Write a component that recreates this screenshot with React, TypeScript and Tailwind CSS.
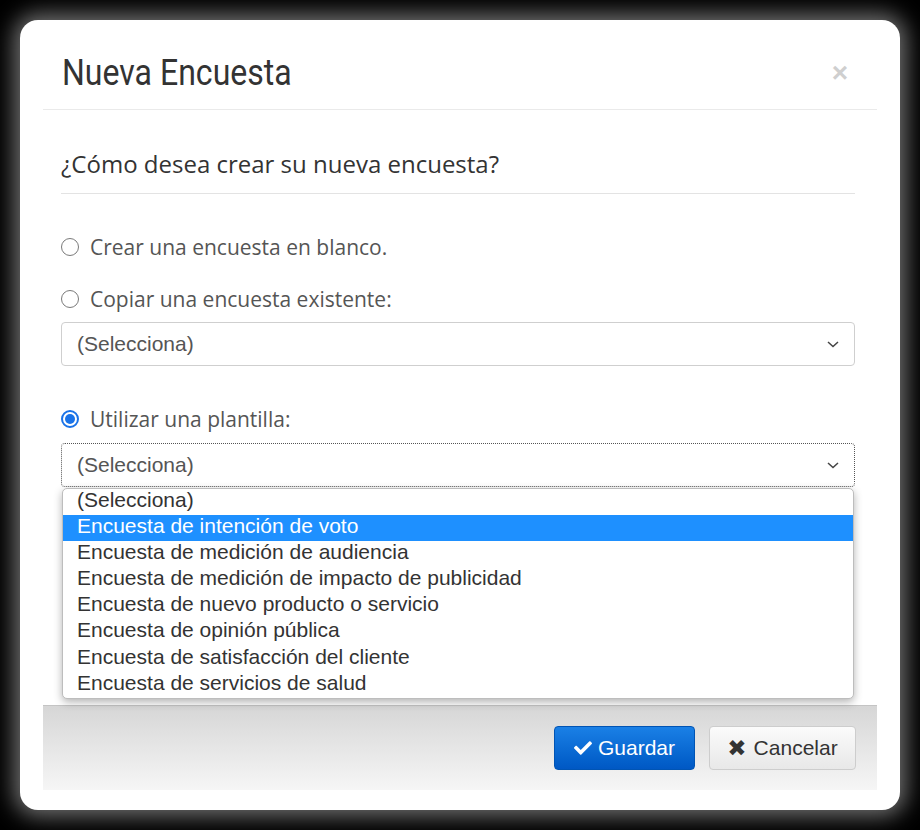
import React from 'react';
import { FaCheck } from 'react-icons/fa';

const templates = [
  '(Selecciona)',
  'Encuesta de intención de voto',
  'Encuesta de medición de audiencia',
  'Encuesta de medición de impacto de publicidad',
  'Encuesta de nuevo producto o servicio',
  'Encuesta de opinión pública',
  'Encuesta de satisfacción del cliente',
  'Encuesta de servicios de salud',
];

const Radio = ({ checked }: { checked?: boolean }) =>
  checked ? (
    <span className="flex h-[18px] w-[18px] items-center justify-center rounded-full border-2 border-[#1a73e8] bg-white">
      <span className="h-[10px] w-[10px] rounded-full bg-[#1a73e8]" />
    </span>
  ) : (
    <span className="h-[18px] w-[18px] rounded-full border border-[#7a7a7a] bg-white" />
  );

const Chevron = () => (
  <svg width="14" height="10" viewBox="0 0 14 10" className="text-[#444]">
    <path d="M2 3l5 4.5L12 3" fill="none" stroke="currentColor" strokeWidth="1.5" />
  </svg>
);

const SelectBox = ({ focused }: { focused?: boolean }) => (
  <div
    className={
      'flex h-[44px] items-center justify-between rounded-[4px] bg-white pl-[15px] pr-[14px] ' +
      (focused ? 'border border-dotted border-[#555]' : 'border border-[#cfcfcf]')
    }
  >
    <span className="text-[21px] text-[#555]" style={{ fontFamily: '"Liberation Sans", Arial, sans-serif' }}>
      (Selecciona)
    </span>
    <Chevron />
  </div>
);

export default function App() {
  return (
    <div className="min-h-[830px] w-[920px] bg-black p-[20px]">
      <div
        className="flex h-[790px] flex-col rounded-[18px] bg-white px-[23px] pt-[23px] pb-[20px] shadow-[0_0_22px_6px_rgba(255,255,255,0.45)]"
        style={{ fontFamily: '"Open Sans", sans-serif' }}
      >
        {/* header */}
        <div className="flex h-[67px] items-center justify-between border-b border-[#eaeaea] pb-[6px] pl-[19px] pr-[29px]">
          <h1
            className="origin-left scale-x-[0.89] text-[36px] leading-none font-normal text-[#333] whitespace-nowrap"
            style={{ fontFamily: 'Roboto, sans-serif' }}
          >
            Nueva Encuesta
          </h1>
          <span className="text-[28px] font-bold leading-none text-[#cfcfcf]" style={{ fontFamily: '"Liberation Sans", sans-serif' }}>
            ×
          </span>
        </div>

        {/* body */}
        <div className="relative flex-1 pl-[18px] pr-[22px]">
          <div className="mt-[38px] border-b border-[#e3e3e3] pb-[13px] text-[24px] leading-[32px] text-[#333]">
            ¿Cómo desea crear su nueva encuesta?
          </div>

          <label className="mt-[39px] flex items-center gap-[11px] text-[21px] leading-[28px] text-[#555]">
            <Radio />
            Crear una encuesta en blanco.
          </label>

          <label className="mt-[24px] flex items-center gap-[11px] text-[21px] leading-[28px] text-[#555]">
            <Radio />
            Copiar una encuesta existente:
          </label>
          <div className="mt-[9px]">
            <SelectBox />
          </div>

          <label className="mt-[39px] flex items-center gap-[11px] text-[21px] leading-[28px] text-[#555]">
            <Radio checked />
            Utilizar una plantilla:
          </label>
          <div className="relative mt-[10px]">
            <SelectBox focused />
            <ul
              className="absolute top-[45px] left-[1px] right-[1px] z-10 overflow-hidden rounded-[5px] border border-[#bdbdbd] bg-white shadow-[0_3px_8px_rgba(0,0,0,0.3)]"
              style={{ fontFamily: '"Liberation Sans", Arial, sans-serif' }}
            >
              {templates.map((t, i) => (
                <li
                  key={t}
                  className={
                    'h-[26.1px] pl-[14px] text-[21px] leading-[22px] ' +
                    (i === 1 ? 'bg-[#1e90ff] text-white' : 'text-[#333]')
                  }
                >
                  {t}
                </li>
              ))}
            </ul>
          </div>
        </div>

        {/* footer */}
        <div className="flex h-[85px] items-center justify-end gap-[14px] border-t border-[#c4c4c4] bg-gradient-to-b from-[#d6d6d6] to-[#f6f6f6] pr-[21px]">
          <button
            className="flex h-[44px] w-[141px] items-center justify-center gap-[6px] rounded-[4px] border border-[#0054b4] bg-gradient-to-b from-[#1a80e6] to-[#0058c4] text-[21px] text-white"
            style={{ fontFamily: '"Liberation Sans", Arial, sans-serif' }}
          >
            <FaCheck className="h-[18px] w-[18px]" />
            Guardar
          </button>
          <button
            className="flex h-[44px] w-[147px] items-center justify-center gap-[7px] rounded-[4px] border border-[#cdcdcd] bg-gradient-to-b from-[#fbfbfb] to-[#e8e8e8] text-[21px] text-[#333]"
            style={{ fontFamily: '"Liberation Sans", Arial, sans-serif' }}
          >
            <span className="text-[23px] leading-none" style={{ fontFamily: '"DejaVu Sans", sans-serif' }}>
              ✖
            </span>
            Cancelar
          </button>
        </div>
      </div>
    </div>
  );
}
